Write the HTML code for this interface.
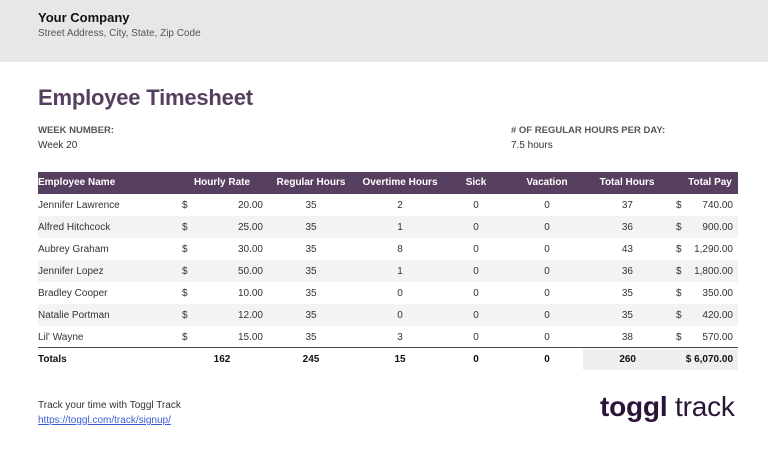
<!DOCTYPE html>
<html><head><meta charset="utf-8"><style>
*{margin:0;padding:0;box-sizing:border-box}
body{width:768px;height:469px;position:relative;background:#fff;font-family:"Liberation Sans",sans-serif;color:#333;overflow:hidden}
.a{position:absolute;white-space:nowrap}
.r{position:absolute;left:38px;width:700px;height:22px;font-size:10px;line-height:24px}
.r span{position:absolute;white-space:nowrap}
.n{left:0}.d{left:144px}.rt{left:165px;width:60px;text-align:right}
.c1{left:243px;width:60px;text-align:center}.c2{left:332px;width:60px;text-align:center}
.c3{left:408px;width:60px;text-align:center}.c4{left:479px;width:60px;text-align:center}
.th{left:535px;width:60px;text-align:right}.d2{left:638px}.p{left:635px;width:60px;text-align:right}
.g{background:#f3f3f3}
.h{background:#573f5f;color:#fff;font-weight:bold;top:172px;line-height:22px}
</style></head><body>
<div class="a" style="left:0;top:0;width:768px;height:62px;background:#e8e6e9"></div>
<div class="a" style="left:38px;top:10px;font-size:13px;font-weight:bold;color:#111">Your Company</div>
<div class="a" style="left:38px;top:28px;font-size:10px;color:#555">Street Address, City, State, Zip Code</div>
<div class="a" style="left:38px;top:85px;font-size:22px;font-weight:bold;color:#564061;letter-spacing:-0.2px">Employee Timesheet</div>
<div class="a" style="left:38px;top:125px;font-size:9.5px;font-weight:bold;color:#555">WEEK NUMBER:</div>
<div class="a" style="left:38px;top:140px;font-size:10px;color:#333">Week 20</div>
<div class="a" style="left:511px;top:125px;font-size:9.5px;font-weight:bold;color:#555"># OF REGULAR HOURS PER DAY:</div>
<div class="a" style="left:511px;top:140px;font-size:10px;color:#333">7.5 hours</div>

<div class="r h"><span class="n">Employee Name</span><span style="left:150px;width:68px;text-align:center">Hourly Rate</span><span class="c1" style="left:233px;width:80px">Regular Hours</span><span class="c2" style="left:317px;width:90px">Overtime Hours</span><span class="c3">Sick</span><span class="c4">Vacation</span><span style="left:549px;width:80px;text-align:center">Total Hours</span><span style="left:632px;width:80px;text-align:center">Total Pay</span></div>

<div class="r" style="top:194px"><span class="n">Jennifer Lawrence</span><span class="d">$</span><span class="rt">20.00</span><span class="c1">35</span><span class="c2">2</span><span class="c3">0</span><span class="c4">0</span><span class="th">37</span><span class="d2">$</span><span class="p">740.00</span></div>
<div class="r g" style="top:216px"><span class="n">Alfred Hitchcock</span><span class="d">$</span><span class="rt">25.00</span><span class="c1">35</span><span class="c2">1</span><span class="c3">0</span><span class="c4">0</span><span class="th">36</span><span class="d2">$</span><span class="p">900.00</span></div>
<div class="r" style="top:238px"><span class="n">Aubrey Graham</span><span class="d">$</span><span class="rt">30.00</span><span class="c1">35</span><span class="c2">8</span><span class="c3">0</span><span class="c4">0</span><span class="th">43</span><span class="d2">$</span><span class="p">1,290.00</span></div>
<div class="r g" style="top:260px"><span class="n">Jennifer Lopez</span><span class="d">$</span><span class="rt">50.00</span><span class="c1">35</span><span class="c2">1</span><span class="c3">0</span><span class="c4">0</span><span class="th">36</span><span class="d2">$</span><span class="p">1,800.00</span></div>
<div class="r" style="top:282px"><span class="n">Bradley Cooper</span><span class="d">$</span><span class="rt">10.00</span><span class="c1">35</span><span class="c2">0</span><span class="c3">0</span><span class="c4">0</span><span class="th">35</span><span class="d2">$</span><span class="p">350.00</span></div>
<div class="r g" style="top:304px"><span class="n">Natalie Portman</span><span class="d">$</span><span class="rt">12.00</span><span class="c1">35</span><span class="c2">0</span><span class="c3">0</span><span class="c4">0</span><span class="th">35</span><span class="d2">$</span><span class="p">420.00</span></div>
<div class="r" style="top:326px"><span class="n">Lil' Wayne</span><span class="d">$</span><span class="rt">15.00</span><span class="c1">35</span><span class="c2">3</span><span class="c3">0</span><span class="c4">0</span><span class="th">38</span><span class="d2">$</span><span class="p">570.00</span></div>
<div class="a" style="left:38px;top:347px;width:700px;height:1px;background:#444"></div>
<div class="a" style="left:583px;top:349px;width:155px;height:21px;background:#efefef"></div>
<div class="r" style="top:348px;font-weight:bold;color:#111"><span class="n">Totals</span><span style="left:154px;width:60px;text-align:center">162</span><span class="c1">245</span><span class="c2">15</span><span class="c3">0</span><span class="c4">0</span><span class="th" style="left:538px">260</span><span class="p" style="left:615px;width:80px">$ 6,070.00</span></div>

<div class="a" style="left:38px;top:400px;font-size:10px;color:#333">Track your time with Toggl Track</div>
<div class="a" style="left:38px;top:415px;font-size:10px;color:#3b5bdb;text-decoration:underline">https://toggl.com/track/signup/</div>
<div class="a" style="left:600px;top:391px;font-size:28px;color:#2c1338;letter-spacing:-0.2px"><b style="font-weight:900">toggl</b><span style="font-weight:normal"> track</span></div>
</body></html>
